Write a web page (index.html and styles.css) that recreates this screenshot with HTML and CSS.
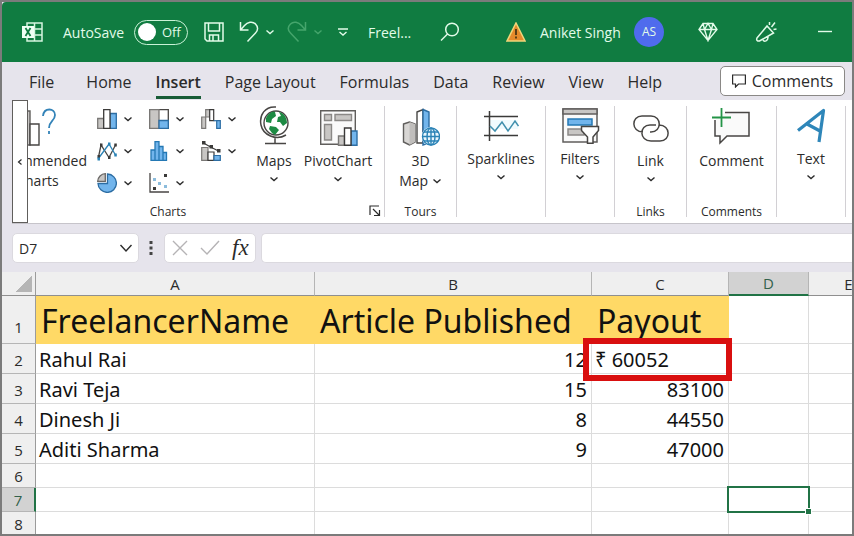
FILE: index.html
```html
<!DOCTYPE html>
<html lang="en">
<head>
<meta charset="utf-8">
<title>Freelancers - Excel</title>
<link rel="stylesheet" href="styles.css">
</head>
<body>
<svg class="defs" aria-hidden="true">
  <symbol id="chev" viewBox="0 0 10 10"><path d="M1.500 3.500 5 6.500l3.500-3" fill="none" stroke="currentColor" stroke-width="1.400"/></symbol>
</svg>
<div class="window">
  <header class="titlebar">
    <svg class="logo" width="22" height="20" viewBox="0 0 22 20"><path d="M5 1h15v18H5zM12.500 1v18M5 7h15M5 13h15" fill="none" stroke="#d5f5df" stroke-width="1.500"/><path d="M0 4h12v12H0z" fill="#effff4"/><path d="m3.500 6 5 8m0-8-5 8" stroke="#107c41" stroke-width="1.800"/></svg>
    <label class="autosave" for="autosave">AutoSave</label>
    <button class="toggle" id="autosave" type="button" role="switch" aria-checked="false"><span class="knob"></span>Off</button>
    <button class="plain save" type="button" aria-label="Save"><svg width="20" height="20" viewBox="0 0 20 20" fill="none" stroke="currentColor" stroke-width="1.500"><path d="M1 1h18v18H3l-2-2zM4.500 1v8h11V1M5.500 19v-6h9v6M9 13v6"/></svg></button>
    <button class="plain undo" type="button" aria-label="Undo"><svg width="20" height="22" viewBox="0 0 20 22" fill="none" stroke="currentColor" stroke-width="1.500"><path d="M1.500 1v8h8M1.500 9l4-4.500c3-3.500 8-4.500 11-1.500s2.500 6.500 0 9l-8 8.500"/></svg><svg class="chev" width="10" height="10"><use href="#chev"/></svg></button>
    <button class="plain redo" type="button" aria-label="Redo" disabled><svg width="20" height="22" viewBox="0 0 20 22" fill="none" stroke="currentColor" stroke-width="1.500"><path d="M18.500 1v8h-8M18.500 9l-4-4.500c-3-3.500-8-4.500-11-1.500s-2.500 6.500 0 9l8 8.500"/></svg><svg class="chev" width="10" height="10"><use href="#chev"/></svg></button>
    <button class="plain custom" type="button" aria-label="Customize toolbar"><svg width="10" height="10" viewBox="0 0 10 10" fill="none" stroke="currentColor" stroke-width="1.400"><path d="M0 2h10M1.500 5 5 8l3.500-3"/></svg></button>
    <span class="doc">Freel...</span>
    <button class="plain search" type="button" aria-label="Search"><svg width="20" height="20" viewBox="0 0 20 20" fill="none" stroke="currentColor" stroke-width="1.500"><circle cx="12" cy="7.500" r="6.300"/><path d="M7.500 12 1 18.500"/></svg></button>
    <svg class="warn" width="20" height="20" viewBox="0 0 20 20"><path d="M10 1 19 19H1z" fill="#e58a2b" stroke="#f0d57a" stroke-width="1.500"/><path d="M10 7v6M10 14.500v2" stroke="#4d3512" stroke-width="1.800"/></svg>
    <span class="user">Aniket Singh</span>
    <span class="avatar">AS</span>
    <button class="plain gem" type="button" aria-label="Premium"><svg width="20" height="20" viewBox="0 0 20 20" fill="none" stroke="currentColor" stroke-width="1.400"><path d="M5 1.500h10l4 6L10 18.500 1 7.500zM1 7.500h18M5 1.500l1.500 6L10 18.500l3.500-11 1.500-6M6.500 7.500 10 1.500l3.500 6"/></svg></button>
    <button class="plain horn" type="button" aria-label="What's new"><svg width="22" height="22" viewBox="0 0 22 22" fill="none" stroke="currentColor" stroke-width="1.500"><path d="M12 5 2 17c-1 2 .5 3.500 2.500 3L18.500 12zM8 19c1 2 5.500 1.500 5-3.500M14.500 4V1M16.500 6l3.500-4.500M18.500 8.500l3-.5"/></svg></button>
    <button class="plain minimize" type="button" aria-label="Minimize"><svg width="14" height="4" viewBox="0 0 14 4"><path d="M0 1.500h14" stroke="currentColor" stroke-width="1.400"/></svg></button>
  </header>

  <nav class="tabs">
    <a href="#file" class="file">File</a>
    <a href="#home">Home</a>
    <a href="#insert" class="active">Insert</a>
    <a href="#layout">Page Layout</a>
    <a href="#formulas">Formulas</a>
    <a href="#data">Data</a>
    <a href="#review">Review</a>
    <a href="#view">View</a>
    <a href="#help">Help</a>
    <button class="comments-btn" type="button"><svg width="14" height="14" viewBox="0 0 14 14" fill="none" stroke="currentColor" stroke-width="1.200"><path d="M.6 1h12.800v9H6.500L3.500 13v-3H.6z"/></svg>Comments</button>
  </nav>

  <main class="ribbon">
    <button class="scroll" type="button" aria-label="Scroll left"><svg width="6" height="8" viewBox="0 0 6 8" fill="none" stroke="currentColor" stroke-width="1.200"><path d="M4.500 1.500 1.500 4l3 2.500"/></svg></button>
    <section class="group charts">
      <div class="tools">
        <div class="clip">
          <button class="big recommended" type="button"><svg width="60" height="40" viewBox="0 0 60 40" fill="none" stroke-width="1.400"><path d="M12 5h10v34H12z" fill="#c8c6c4" stroke="#605e5c"/><path d="M22 18h9v21h-9z" fill="#fff" stroke="#484644"/><path d="M35 10c1-9 12-8 12-1 0 6-6 6-6 13M41 25v3" stroke="#3383b8" stroke-width="1.800"/></svg><span>Recommended<br>Charts</span></button>
        </div>
        <div class="chart-grid">
          <button class="mini" type="button" aria-label="Column chart"><svg width="20" height="20" viewBox="0 0 20 20" stroke-width="1.300"><path d="M.7 9.500h6v9.800h-6z" fill="#c8c6c4" stroke="#7a7876"/><path d="M13 4.500h6.300v14.800H13z" fill="#72b5ec" stroke="#2c6da3"/><path d="M6.700.7H13v18.600H6.700z" fill="#fff" stroke="#3b3a39"/></svg><svg class="chev" width="10" height="10"><use href="#chev"/></svg></button>
          <button class="mini" type="button" aria-label="Hierarchy chart"><svg width="20" height="20" viewBox="0 0 20 20" stroke-width="1.300"><path d="M.7.7h18.600v18.600H.7z" fill="#fff" stroke="#484644"/><path d="M.7.7H10v18.600H.7z" fill="#c8c6c4" stroke="#7a7876"/><path d="M10 11.500h9.300v7.800H10z" fill="#72b5ec" stroke="#2c6da3"/></svg><svg class="chev" width="10" height="10"><use href="#chev"/></svg></button>
          <button class="mini" type="button" aria-label="Waterfall chart"><svg width="20" height="20" viewBox="0 0 20 20" stroke-width="1.200"><path d="M.7 8h4v11.300h-4zM4.700.7h4V8h-4z" fill="#c8c6c4" stroke="#7a7876"/><path d="M8.700.7h4v11h-4z" fill="#fff" stroke="#3b3a39"/><path d="M12.700 11.700h3" stroke="#2c6da3"/><path d="M15.700 11.700h3.600v7.600h-3.600z" fill="#72b5ec" stroke="#2c6da3"/></svg><svg class="chev" width="10" height="10"><use href="#chev"/></svg></button>
          <button class="mini" type="button" aria-label="Line chart"><svg width="20" height="20" viewBox="0 0 20 20" fill="none" stroke-width="1.300"><path d="M1.500 16 4 4l8 12.500L18.500 4" stroke="#484644"/><path d="m1 18 11-15 6.500 11" stroke="#2b83b6"/><path d="M.5 14h2.500v3H.5zM3 2.500h2.500v3H3zM11 15h2.500v3H11zM17.300 2.500h2.500v3h-2.500z" fill="#3b3a39"/><path d="M.5 16.500h2.500v3H.5zM11 1.500h2.500v3H11zM17.300 12.500h2.500v3h-2.500z" fill="#2b83b6"/></svg><svg class="chev" width="10" height="10"><use href="#chev"/></svg></button>
          <button class="mini" type="button" aria-label="Histogram"><svg width="20" height="20" viewBox="0 0 20 20" fill="#72b5ec" stroke="#2478b4" stroke-width="1.300"><path d="M2 9h4v10.300H2zM6 .7h4v18.600H6zM10 5.500h4v13.800h-4zM14 11.500h3.500v7.800H14z"/></svg><svg class="chev" width="10" height="10"><use href="#chev"/></svg></button>
          <button class="mini" type="button" aria-label="Combo chart"><svg width="20" height="20" viewBox="0 0 20 20" stroke-width="1.200"><path d="M.7 6.500h6.300v12.800H.7z" fill="#c8c6c4" stroke="#7a7876"/><path d="M7 11h6v8.300H7z" fill="#fff" stroke="#3b3a39"/><path d="M13 14.500h6.300v4.800H13z" fill="#72b5ec" stroke="#2c6da3"/><path d="m2.500 2 7 4 8 4" fill="none" stroke="#3b3a39"/><path d="M1 0h3.500v3.500H1zM8.500 4H12v3.500H8.500zM16 8h3.500v3.500H16z" fill="#3b3a39"/></svg><svg class="chev" width="10" height="10"><use href="#chev"/></svg></button>
          <button class="mini" type="button" aria-label="Pie chart"><svg width="20" height="20" viewBox="0 0 20 20" stroke-width="1.300"><path d="M10.500 1v9.500H1A9.200 9.200 0 1 0 10.500 1z" fill="#72b5ec" stroke="#2c6da3"/><path d="M8.300.7v7.600H.7A8 8 0 0 1 8.300.7z" fill="#c8c6c4" stroke="#6a6866"/></svg><svg class="chev" width="10" height="10"><use href="#chev"/></svg></button>
          <button class="mini" type="button" aria-label="Scatter chart"><svg width="20" height="20" viewBox="0 0 20 20"><path d="M1 0v19h19" fill="none" stroke="#484644" stroke-width="1.300"/><path d="M4 5h3v3H4zM9 9h3v3H9zM15 12h3v3h-3z" fill="#8cbcdc"/><path d="M15 1h3v3h-3zM4 14h3v3H4z" fill="#3b3a39"/></svg><svg class="chev" width="10" height="10"><use href="#chev"/></svg></button>
        </div>
        <button class="big maps" type="button"><svg width="32" height="40" viewBox="0 0 32 40"><circle cx="18" cy="17" r="12" fill="#fff" stroke="#484644" stroke-width="1.400"/><path d="M8 12c3-6 7-7 9-6l1 4-4 3-1 4-5-1zM21 6c5 1 8 6 8 11l-4 3-3-4-3 0 1-5 3-1zM12 20l6 1 3 3-4 5-3-2-3-4z" fill="#1d8a43"/><path d="M18 1C7 0 1 9 3 19s15 16 25 10M17 31v6M7 37.500h21" fill="none" stroke="#484644" stroke-width="1.500"/></svg><span>Maps</span><svg class="chev" width="10" height="10"><use href="#chev"/></svg></button>
        <button class="big pivot" type="button"><svg width="40" height="40" viewBox="0 0 40 40" stroke-width="1.400"><path d="M2.700 4.700h34.600v33.600H2.700z" fill="#fafafa" stroke="#605e5c"/><path d="M6.500 8.500h7v6h-7zM17 8.500h16.500v6H17zM6.500 18.500h7V34h-7z" fill="#c8c6c4" stroke="#8a8886"/><path d="M20.500 30h6v9.300h-6z" fill="#c8c6c4" stroke="#7a7876"/><path d="M33 25h6v14.300h-6z" fill="#72b5ec" stroke="#2c6da3"/><path d="M26.500 22H33v17.300h-6.500z" fill="#fff" stroke="#3b3a39"/></svg><span>PivotChart</span><svg class="chev" width="10" height="10"><use href="#chev"/></svg></button>
      </div>
      <footer>Charts<button class="launcher" type="button" aria-label="Chart options"><svg width="12" height="12" viewBox="0 0 12 12" fill="none" stroke="currentColor" stroke-width="1.200"><path d="M1 10V1h9M4 4l6 6M10.500 5v5.500H5"/></svg></button></footer>
    </section>
    <section class="group tours">
      <div class="tools"><button class="big" type="button"><svg width="40" height="40" viewBox="0 0 40 40" stroke-width="1.400"><path d="m3.500 18 6-2 5.500 2v18l-5.500 3-6-3z" fill="#d8d6d4" stroke="#605e5c"/><path d="m9.500 16 5.500 2v18l-5.500 3z" fill="#c0bebc"/><path d="m17 6 6-2.500V37h-6z" fill="#fff" stroke="#484644"/><path d="m23 3.500 6 2.500v31l-6 2z" fill="#72b5ec" stroke="#2c6da3"/><circle cx="31" cy="30.500" r="9.500" fill="#fff"/><g fill="#e9f6fd" stroke="#2b83b6"><circle cx="31" cy="30.500" r="8.500"/><ellipse cx="31" cy="30.500" rx="4" ry="8.500"/><path d="M22.500 30.500h17M24 26h14M24 35h14M31 22v17"/></g></svg><span>3D<br>Map <svg class="chev" width="10" height="10"><use href="#chev"/></svg></span></button></div>
      <footer>Tours</footer>
    </section>
    <section class="group sparklines">
      <div class="tools"><button class="big" type="button"><svg width="36" height="38" viewBox="0 0 36 38" fill="none" stroke-width="1.500"><path d="M7 14h28v9H7z" fill="#f0fbfe"/><path d="M6.500 5v30M1 10.500h34M1 29.500h34" stroke="#3b3a39"/><path d="m7 20 5 5 7-9 6 9 7-10 3.500 5" stroke="#3f8fad"/></svg><span>Sparklines</span><svg class="chev" width="10" height="10"><use href="#chev"/></svg></button></div>
      <footer></footer>
    </section>
    <section class="group filters">
      <div class="tools"><button class="big" type="button"><svg width="40" height="38" viewBox="0 0 40 38" stroke-width="1.500"><path d="M3 3h34v33H3z" fill="#fafafa" stroke="#605e5c"/><path d="M3 3h34v5H3z" fill="#c8c6c4" stroke="#605e5c"/><path d="M8 13h24v6H8z" fill="#72b5ec" stroke="#2478b4"/><path d="M8 23h16v6H8z" fill="#c8c6c4" stroke="#8a8886"/><path d="M21.500 20.500h17v4L33 31v6.300h-5.500V31l-6-6.500z" fill="#fff" stroke="#484644"/></svg><span>Filters</span><svg class="chev" width="10" height="10"><use href="#chev"/></svg></button></div>
      <footer></footer>
    </section>
    <section class="group links">
      <div class="tools"><button class="big" type="button"><svg width="36" height="40" viewBox="0 0 36 40" fill="none" stroke="#484644" stroke-width="1.500"><path d="M10 26C-2 26-2 10 9 10h9c11 0 11 16 0 16h-1M26 19c12 0 12 16 1 16h-9c-12 0-12-16-1-16h6"/></svg><span>Link</span><svg class="chev" width="10" height="10"><use href="#chev"/></svg></button></div>
      <footer>Links</footer>
    </section>
    <section class="group comments">
      <div class="tools"><button class="big" type="button"><svg width="40" height="40" viewBox="0 0 40 40" fill="none" stroke-width="1.500"><path d="M14 6h24v24H16l-7 7v-7H4V14z" fill="#fafafa"/><path d="M14 6.500h24V30H16l-7 7v-7H4V14" stroke="#484644"/><path d="M10.500 2v19M1 11.500h19" stroke="#249447" stroke-width="1.800"/></svg><span>Comment</span></button></div>
      <footer>Comments</footer>
    </section>
    <section class="group text">
      <div class="tools"><button class="big" type="button"><svg width="32" height="38" viewBox="0 0 32 38" fill="none" stroke="#2e86b9" stroke-width="3.200" stroke-linejoin="round"><path d="M3 24.500 28.500 4.500 24 36M12 18l13 7"/></svg><span>Text</span><svg class="chev" width="10" height="10"><use href="#chev"/></svg></button></div>
      <footer></footer>
    </section>
  </main>

  <div class="formula-bar">
    <div class="namebox"><input type="text" value="D7" aria-label="Name box"><svg width="14" height="10" viewBox="0 0 14 10" fill="none" stroke="currentColor" stroke-width="1.400"><path d="m1.500 2 5.500 6 5.500-6"/></svg></div>
    <svg class="dots" width="4" height="14" viewBox="0 0 4 14" fill="#444"><path d="M.5 0h3v3h-3zM.5 5.500h3v3h-3zM.5 11h3v3h-3z"/></svg>
    <div class="fx-tools">
      <button type="button" aria-label="Cancel"><svg width="16" height="16" viewBox="0 0 16 16" fill="none" stroke="#b5b3b5" stroke-width="1.400"><path d="m1 1 14 14M15 1 1 15"/></svg></button>
      <button type="button" aria-label="Enter"><svg width="20" height="16" viewBox="0 0 20 16" fill="none" stroke="#b5b3b5" stroke-width="1.400"><path d="m1 8 6 6L19 1"/></svg></button>
      <button class="fx" type="button">fx</button>
    </div>
    <input class="formula" type="text" aria-label="Formula">
  </div>

  <div class="sheet">
    <table>
      <colgroup><col class="c-num"><col class="c-a"><col class="c-b"><col class="c-c"><col class="c-d"><col class="c-d"></colgroup>
      <thead><tr><th class="corner"></th><th>A</th><th>B</th><th>C</th><th class="sel">D</th><th>E</th></tr></thead>
      <tbody>
        <tr class="title"><th>1</th><td>FreelancerName</td><td>Article Published</td><td>Payout</td><td></td><td></td></tr>
        <tr class="data"><th>2</th><td>Rahul Rai</td><td class="num">12</td><td class="marked">₹ 60052</td><td></td><td></td></tr>
        <tr class="data"><th>3</th><td>Ravi Teja</td><td class="num">15</td><td class="num">83100</td><td></td><td></td></tr>
        <tr class="data"><th>4</th><td>Dinesh Ji</td><td class="num">8</td><td class="num">44550</td><td></td><td></td></tr>
        <tr class="data"><th>5</th><td>Aditi Sharma</td><td class="num">9</td><td class="num">47000</td><td></td><td></td></tr>
        <tr><th>6</th><td></td><td></td><td></td><td></td><td></td></tr>
        <tr><th class="sel">7</th><td></td><td></td><td></td><td class="cursor"></td><td></td></tr>
        <tr><th>8</th><td></td><td></td><td></td><td></td><td></td></tr>
      </tbody>
    </table>
  </div>
</div>
</body>
</html>
```
FILE: styles.css
```css
* { box-sizing: border-box; }

body {
  margin: 0;
  font-family: "Open Sans", "Noto Sans", sans-serif;
  font-size: 14px;
  color: #2b2b2b;
}

button, input { font: inherit; color: inherit; }

button {
  padding: 0;
  border: 0;
  background: none;
}

svg { display: block; flex: none; }

.defs { position: absolute; width: 0; height: 0; }

.window {
  display: flex;
  flex-direction: column;
  height: 100vh;
  border: 2px solid #7b7b7b;
  overflow: hidden;
  background: #e6e4ec;
}

/* Title bar */
.titlebar {
  display: flex;
  align-items: center;
  flex: none;
  height: 60px;
  padding: 0 20px;
  border-top-left-radius: 4px;
  background: #107c41;
  color: #e2fbe9;
  font-size: 14px;
  white-space: nowrap;
}

.autosave { width: 71px; margin-left: 19px; }

.toggle {
  display: flex;
  align-items: center;
  gap: 6px;
  width: 54px;
  height: 25px;
  padding-left: 3px;
  border: 1px solid #c9f2d6;
  border-radius: 13px;
  font-size: 13px;
}

.knob {
  width: 18px;
  height: 18px;
  border-radius: 50%;
  background: #fff;
}

.plain { display: flex; align-items: center; gap: 6px; }
.save { margin-left: 16px; }
.undo { margin-left: 15px; }
.redo { margin-left: 12px; color: #45a56c; }
.custom { margin-left: 15px; }
.doc { width: 44px; margin-left: 20px; }
.search { margin-left: 28px; }
.warn { margin-left: auto; }
.user { width: 82px; margin-left: 14px; }

.avatar {
  width: 30px;
  margin-left: 12px;
  border-radius: 50%;
  background: #4f6bed;
  font-size: 12px;
  line-height: 30px;
  text-align: center;
}

.gem { margin-left: 34px; }
.horn { margin-left: 37px; }
.minimize { margin-left: 41px; }

/* Ribbon tabs */
.tabs {
  display: flex;
  align-items: center;
  flex: none;
  gap: 24px;
  height: 38px;
  padding: 0 7px 0 27px;
  font-size: 16px;
  white-space: nowrap;
}

.tabs a {
  padding-top: 4px;
  border-bottom: 3px solid transparent;
  color: inherit;
  line-height: 28px;
  text-decoration: none;
}

.tabs .file { margin-right: 8px; }
.tabs a.active { border-color: #185c37; font-weight: 600; }

.comments-btn {
  display: flex;
  align-items: center;
  justify-content: center;
  gap: 6px;
  width: 125px;
  height: 30px;
  margin-left: auto;
  border: 1px solid #8a8886;
  border-radius: 5px;
  background: #fff;
}

/* Ribbon */
.ribbon {
  display: flex;
  flex: none;
  height: 124px;
  margin-left: 10px;
  border-bottom: 1px solid #c6c4ca;
  background: #fff;
}

.scroll {
  display: flex;
  align-items: center;
  justify-content: center;
  width: 16px;
  border: 1px solid #605e5c;
}

.group {
  display: flex;
  flex-direction: column;
  justify-content: space-between;
  align-items: center;
  margin: 6px 0;
  border-right: 1px solid #d2d0d4;
}

.charts { width: 357px; }
.tours { width: 72px; }
.sparklines { width: 89px; }
.filters { width: 69px; }
.links { width: 72px; }
.comments { width: 90px; }
.text { width: 69px; }

.tools { display: flex; }
.charts .tools { align-self: stretch; }

.group footer {
  position: relative;
  align-self: stretch;
  font-size: 12px;
  line-height: 10px;
  text-align: center;
}

.charts footer { padding-right: 76px; }
.launcher { position: absolute; right: 3px; bottom: 0; }

.big {
  display: flex;
  flex-direction: column;
  align-items: center;
  line-height: 20px;
}

.big > span { margin-top: 5px; }
.big > .chev { margin-top: 3px; }
.big span .chev { display: inline-block; }

.clip {
  display: flex;
  justify-content: flex-end;
  width: 59px;
  overflow: hidden;
}

.clip .big { flex: none; }

.chart-grid {
  display: grid;
  grid-template-columns: repeat(3, 52px);
  grid-template-rows: repeat(3, 32px);
  margin: -3px 0 0 10px;
}

.mini { display: flex; align-items: center; gap: 6px; }
.maps { width: 50px; margin-left: -4px; }
.pivot { width: 78px; }

/* Formula bar */
.formula-bar {
  display: flex;
  align-items: center;
  flex: none;
  height: 48px;
  padding-left: 10px;
}

.namebox, .fx-tools, .formula {
  height: 30px;
  border: 1px solid #dbd9df;
  border-radius: 5px;
  background: #fff;
}

.namebox {
  display: flex;
  align-items: center;
  width: 127px;
  padding: 0 5px 0 6px;
}

.namebox input {
  flex: 1;
  min-width: 0;
  padding: 0;
  border: 0;
  background: none;
}

.dots { margin: 0 11px 0 10px; }

.fx-tools {
  display: flex;
  align-items: center;
  gap: 12px;
  width: 92px;
  padding-left: 7px;
}

.fx {
  font-family: "Liberation Serif", serif;
  font-size: 23px;
  font-style: italic;
  line-height: 24px;
}

.formula { flex: 1; min-width: 0; margin-left: 5px; border-right: 0; border-radius: 5px 0 0 5px; }

/* Sheet */
.sheet { flex: 1; min-height: 0; overflow: hidden; background: #fff; }

table {
  width: 887px;
  border-collapse: separate;
  border-spacing: 0;
  table-layout: fixed;
  white-space: nowrap;
}

.c-num { width: 34px; }
.c-a { width: 279px; }
.c-b { width: 277px; }
.c-c { width: 137px; }
.c-d { width: 80px; }

tr { height: 24px; }
.data { height: 30px; }
.title { height: 48px; }

th {
  padding: 0;
  border-right: 1px solid #9b9b9b;
  border-bottom: 1px solid #b5b5b5;
  background: #efefef;
  font-size: 15px;
  font-weight: 400;
  line-height: 20px;
}

thead th { border-right-color: #b5b5b5; border-bottom-color: #8f8f8f; }
.data th { padding-top: 2px; }
.title th { padding-bottom: 6px; vertical-align: bottom; }

thead .corner {
  border-right-color: #9b9b9b;
  background: linear-gradient(135deg, transparent 50%, #b5b5b5 50%) 14px 4px / 16px 16px no-repeat #efefef;
}

th.sel { background: #d2d2d2; color: #33614b; }
thead th.sel { border-bottom: 2px solid #217346; }
tbody th.sel { border-right: 2px solid #217346; }

td {
  position: relative;
  padding: 0 4px 0 3px;
  border-right: 1px solid #dcdcdc;
  border-bottom: 1px solid #dcdcdc;
  color: #111;
  font-family: "Noto Sans", sans-serif;
  font-size: 20px;
  line-height: 24px;
}

.data td { padding-top: 2px; }
.title td { padding: 2px 0 0 5px; font-size: 32px; line-height: 44px; }
.title td:nth-child(-n+4) { border-color: #ffd966; background: #ffd966; }
.num { text-align: right; }

.marked, .cursor { z-index: 1; }

.marked::after {
  content: "";
  position: absolute;
  inset: -6px -4px -8px -9px;
  border: 6px solid #d90f0f;
}

.cursor::after {
  content: "";
  position: absolute;
  inset: -2px -2px -2px -2px;
  border: 2px solid #217346;
}

.cursor::before {
  content: "";
  position: absolute;
  z-index: 1;
  right: -3px;
  bottom: -3px;
  width: 5px;
  height: 5px;
  outline: 1px solid #fff;
  background: #217346;
}
```
